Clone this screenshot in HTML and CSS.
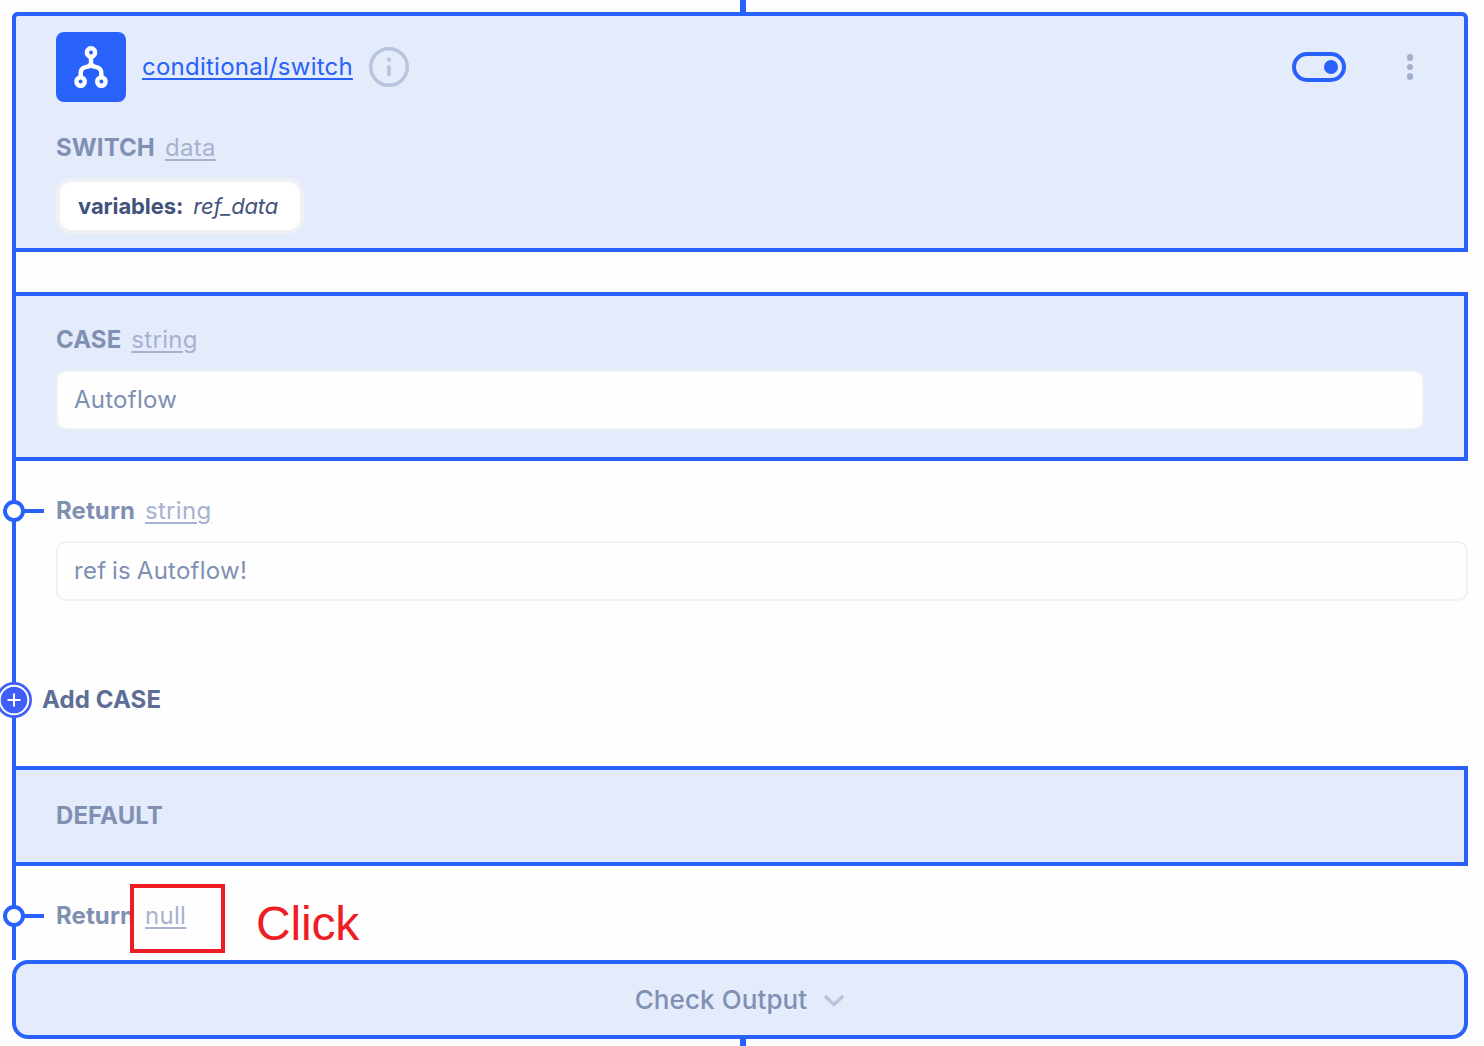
FILE: index.html
```html
<!DOCTYPE html>
<html lang="en">
<head>
<meta charset="utf-8">
<title>conditional/switch</title>
<link rel="stylesheet" href="styles.css">
</head>
<body>
<main class="flow">
  <div class="connector connector-in"></div>
  <div class="rail">
    <section class="panel panel-head">
      <header class="head-row">
        <span class="node-icon">
          <svg width="70" height="70" viewBox="0 0 70 70" fill="none" stroke="#fff" stroke-width="4.4">
            <circle cx="35" cy="20.500" r="4.2"/>
            <circle cx="24.600" cy="49.600" r="4.2"/>
            <circle cx="45.400" cy="49.600" r="4.2"/>
            <path d="M35 24.500V31C35 33.500 33.500 34.500 30.500 34.900C26.500 35.500 24.700 37.500 24.700 41V45.500M35 31C35 33.500 36.500 34.500 39.500 34.900C43.500 35.500 45.300 37.500 45.300 41V45.500"/>
          </svg>
        </span>
        <a class="node-name">conditional/switch</a>
        <svg class="info" width="40" height="40" viewBox="0 0 40 40">
          <circle cx="20" cy="20" r="18.300" fill="none" stroke="#b8c4de" stroke-width="3.400"/>
          <circle cx="20" cy="12.700" r="2.100" fill="#b8c4de"/>
          <path d="M20 20V27.300" stroke="#b8c4de" stroke-width="3.800" stroke-linecap="round"/>
        </svg>
        <span class="toggle"><span class="knob"></span></span>
        <span class="menu"><i class="dot"></i><i class="dot"></i><i class="dot"></i></span>
      </header>
      <div class="label switch-label"><b>SWITCH</b><a class="type">data</a></div>
      <div class="chip"><b class="chip-key">variables:</b><em class="chip-value">ref_data</em></div>
    </section>
    <section class="panel panel-case">
      <div class="label"><b>CASE</b><a class="type">string</a></div>
      <div class="field">Autoflow</div>
    </section>
    <section class="result result-case">
      <div class="label"><span class="port"></span><b>Return</b><a class="type">string</a></div>
      <div class="field">ref is Autoflow!</div>
    </section>
    <div class="add">
      <svg width="36" height="36" viewBox="0 0 36 36">
        <circle cx="18" cy="18" r="18" fill="#3f5ff8"/>
        <circle cx="18" cy="18" r="14.300" fill="none" stroke="#fff" stroke-width="2"/>
        <path d="M11.500 18H24.500M18 11.500V24.500" stroke="#fff" stroke-width="2"/>
      </svg>
      <b>Add CASE</b>
    </div>
    <section class="panel panel-default"><div class="label"><b>DEFAULT</b></div></section>
    <section class="result result-default">
      <div class="label"><span class="port"></span><b>Return</b><a class="type">null</a></div>
      <div class="mark"></div>
      <div class="mark-text">Click</div>
    </section>
  </div>
  <div class="output">
    <span>Check Output</span>
    <svg width="22" height="14" viewBox="0 0 22 14"><path d="M3 4L11 11.500L19 4" fill="none" stroke="#b8c4de" stroke-width="3.600" stroke-linecap="round" stroke-linejoin="round"/></svg>
  </div>
  <div class="connector connector-out"></div>
</main>
</body>
</html>
```
FILE: styles.css
```css
* { box-sizing: border-box; }
body {
  margin: 0;
  background: #fefefe;
  font-family: Inter, "Liberation Sans", sans-serif;
  font-size: 24px;
  line-height: 30px;
  color: #8090b3;
  overflow: hidden;
}
.flow {
  display: flex;
  flex-direction: column;
  height: 1046px;
  padding: 0 16px 0 12px;
}
.connector { width: 6px; margin-left: 728px; background: #2962fa; }
.connector-in { height: 12px; }
.connector-out { height: 7px; }
.rail {
  height: 948px;
  border-left: 4px solid #2962fa;
  border-top-left-radius: 6px;
}
.panel {
  background: #e4ebfb;
  border: 4px solid #2962fa;
  border-left: 0;
  padding-left: 40px;
}
.panel-head {
  height: 240px;
  margin: 0 0 40px -4px;
  border-left: 4px solid #2962fa;
  border-radius: 6px 6px 0 0;
  padding: 16px 51px 0 40px;
}
.head-row { display: flex; align-items: center; height: 70px; }
.node-icon { width: 70px; height: 70px; border-radius: 8px; background: #2962fa; }
.node-icon svg, .info, .add svg { display: block; }
.node-name {
  width: 211px;
  margin: 0 16px;
  color: #2962fa;
  text-decoration: underline 2px;
  text-underline-offset: 3px;
  letter-spacing: 0.24px;
  white-space: nowrap;
}
.toggle {
  display: flex;
  align-items: center;
  justify-content: flex-end;
  width: 54px;
  height: 30px;
  margin-left: auto;
  padding-right: 4px;
  border: 4px solid #2962fa;
  border-radius: 15px;
}
.knob { width: 14px; height: 14px; border-radius: 50%; background: #2962fa; }
.menu {
  display: flex;
  flex-direction: column;
  gap: 3px;
  margin-left: 61px;
}
.dot { width: 6.400px; height: 6.400px; border-radius: 50%; background: #a4b1ce; }
.label { display: flex; gap: 10px; height: 30px; position: relative; white-space: nowrap; }
.label b, .add b { font-weight: 700; letter-spacing: 0.1px; }
.type {
  color: #a7b2cf;
  letter-spacing: 0.3px;
  text-decoration: underline 2px;
  text-underline-offset: 3px;
}
.switch-label { margin-top: 31px; }
.chip {
  display: flex;
  align-items: center;
  gap: 10px;
  width: 248px;
  height: 56px;
  margin-top: 15px;
  padding-left: 18px;
  border: 4px solid #f0f1f5;
  border-radius: 16px;
  background: #fff;
  color: #42527b;
  font-size: 22px;
}
.chip-key { letter-spacing: -0.1px; }
.chip-value { letter-spacing: -0.15px; }
.panel-case { height: 169px; padding: 29px 40px 0 40px; }
.field {
  display: flex;
  align-items: center;
  height: 60px;
  margin-top: 15px;
  padding-left: 16px;
  border: 2px solid #f0f1f6;
  border-radius: 10px;
  background: #fefefe;
  letter-spacing: 0.25px;
  word-spacing: -1.2px;
}
.result { position: relative; padding-left: 40px; }
.result-case { height: 221px; padding-top: 35px; }
.port {
  position: absolute;
  left: -53px;
  top: 4px;
  width: 22px;
  height: 22px;
  border: 4px solid #2962fa;
  border-radius: 50%;
  background: #fff;
}
.port::after {
  content: "";
  position: absolute;
  left: 17px;
  top: 5px;
  width: 20px;
  height: 4px;
  background: #2962fa;
}
.add {
  display: flex;
  align-items: center;
  gap: 10px;
  height: 36px;
  margin: 0 0 48px -20px;
  color: #5d6d95;
}
.panel-default { height: 100px; padding-top: 31px; }
.result-default { height: 94px; padding-top: 35px; }
.mark {
  position: absolute;
  left: 114px;
  top: 18px;
  width: 95px;
  height: 69px;
  border: 4px solid #ee1c25;
}
.mark-text {
  position: absolute;
  left: 240px;
  top: 31px;
  color: #ee1c25;
  font: 48px/54px "Liberation Sans", Arial, sans-serif;
  letter-spacing: -0.2px;
}
.output {
  display: flex;
  align-items: center;
  justify-content: center;
  gap: 16px;
  height: 79px;
  border: 4px solid #2962fa;
  border-radius: 16px;
  background: #e4ebfb;
  font-size: 26px;
  font-weight: 500;
  letter-spacing: 0.1px;
}
```
